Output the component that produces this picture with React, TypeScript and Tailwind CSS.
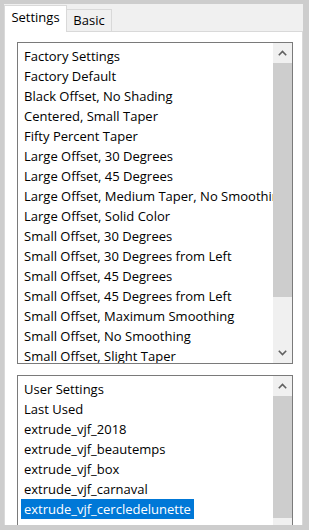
import React from "react";

const factory = [
  "Factory Default",
  "Black Offset, No Shading",
  "Centered, Small Taper",
  "Fifty Percent Taper",
  "Large Offset, 30 Degrees",
  "Large Offset, 45 Degrees",
  "Large Offset, Medium Taper, No Smoothing",
  "Large Offset, Solid Color",
  "Small Offset, 30 Degrees",
  "Small Offset, 30 Degrees from Left",
  "Small Offset, 45 Degrees",
  "Small Offset, 45 Degrees from Left",
  "Small Offset, Maximum Smoothing",
  "Small Offset, No Smoothing",
  "Small Offset, Slight Taper",
];

const user = [
  "Last Used",
  "extrude_vjf_2018",
  "extrude_vjf_beautemps",
  "extrude_vjf_box",
  "extrude_vjf_carnaval",
  "extrude_vjf_cercledelunette",
];

function Chevron({ down }: { down?: boolean }) {
  return (
    <svg width="9" height="6" viewBox="0 0 9 6" className="block">
      <path
        d={down ? "M0.8 0.8 L4.5 4.5 L8.2 0.8" : "M0.8 5.2 L4.5 1.5 L8.2 5.2"}
        fill="none"
        stroke="#606060"
        strokeWidth="1.6"
      />
    </svg>
  );
}

function Row({ text, selected }: { text: string; selected?: boolean }) {
  return (
    <div className="h-[20px] leading-[20px] whitespace-nowrap">
      <span
        className={
          "inline-block px-[3px] h-[20px] " +
          (selected ? "bg-[#0078d7] text-white" : "text-black")
        }
      >
        {text}
      </span>
    </div>
  );
}

export default function App() {
  return (
    <div
      className="w-[309px] h-[530px] bg-[#cdcdcd] pt-[4px] pl-[4px] pr-[6px] pb-[5px] overflow-hidden text-[13px]"
      style={{ fontFamily: '"Open Sans", "Liberation Sans", sans-serif' }}
    >
      <div className="flex flex-col h-full bg-[#f0f0f0]">
        {/* tabs */}
        <div className="flex items-end h-[27px] shrink-0">
          <div className="relative z-10 w-[63px] h-[27px] mb-[-1px] bg-white border border-b-0 border-[#d9d9d9] flex items-center justify-center text-black pb-[2px]">
            Settings
          </div>
          <div className="w-[45px] h-[22px] bg-[#f0f0f0] border border-l-0 border-b-0 border-[#d9d9d9] flex items-center justify-center text-black">
            Basic
          </div>
        </div>
        {/* panel */}
        <div className="flex-1 min-h-0 bg-white border border-b-0 border-[#d9d9d9] overflow-hidden pl-[12px] pr-[9px] pt-[10px]">
          {/* list 1 */}
          <div className="h-[322px] border border-[#7a7a7a] flex">
            <div className="flex-1 min-w-0 overflow-hidden pl-[3px] pt-[3px]">
              <Row text="Factory Settings" />
              {factory.map((t) => (
                <Row key={t} text={t} />
              ))}
            </div>
            <div className="w-[19px] shrink-0 bg-[#f0f0f0] flex flex-col">
              <div className="h-[20px] flex items-center justify-center">
                <Chevron />
              </div>
              <div className="h-[234px] bg-[#cdcdcd]" />
              <div className="flex-1" />
              <div className="h-[20px] flex items-center justify-center">
                <Chevron down />
              </div>
            </div>
          </div>
          {/* list 2 */}
          <div className="h-[165px] mt-[11px] border border-[#7a7a7a] flex">
            <div className="flex-1 min-w-0 overflow-hidden pl-[3px] pt-[3px]">
              <Row text="User Settings" />
              {user.map((t) => (
                <Row key={t} text={t} selected={t === "extrude_vjf_cercledelunette"} />
              ))}
            </div>
            <div className="w-[19px] shrink-0 bg-[#f0f0f0] flex flex-col">
              <div className="h-[20px] flex items-center justify-center">
                <Chevron />
              </div>
              <div className="h-[122px] bg-[#cdcdcd]" />
              <div className="flex-1" />
              <div className="h-[20px] flex items-center justify-center">
                <Chevron down />
              </div>
            </div>
          </div>
        </div>
      </div>
    </div>
  );
}
